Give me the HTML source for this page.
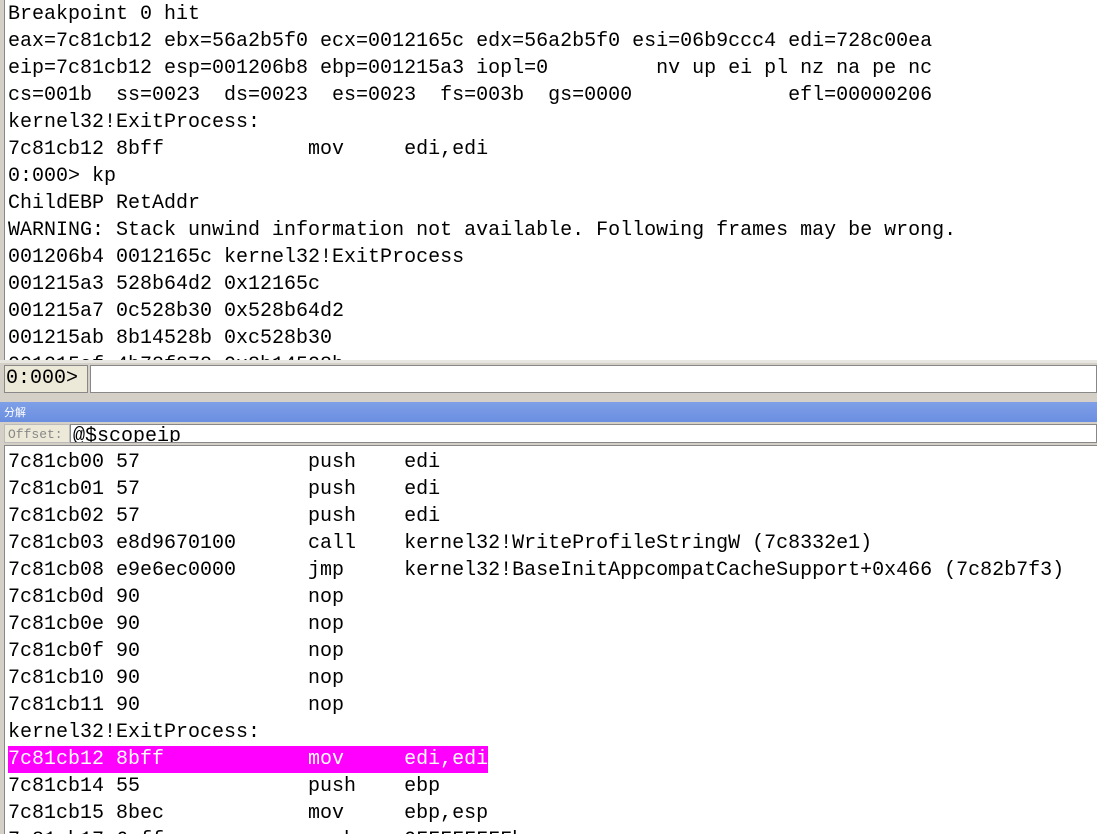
<!DOCTYPE html><html><head><style>
body{margin:0;width:1097px;height:834px;overflow:hidden;background:#d4d0c8;font-family:"Liberation Mono",monospace;}
.pane{position:absolute;background:#fff;overflow:hidden;white-space:pre;font-size:20px;line-height:27px;color:#000}
.hl{background:#ff00ff;color:#fff;display:inline-block;width:480px}
</style></head><body>
<div class="pane" style="left:4px;top:0;width:1093px;height:360px;padding-left:3px;box-sizing:border-box;padding-top:1px;border-left:1px solid #888">Breakpoint 0 hit
eax=7c81cb12 ebx=56a2b5f0 ecx=0012165c edx=56a2b5f0 esi=06b9ccc4 edi=728c00ea
eip=7c81cb12 esp=001206b8 ebp=001215a3 iopl=0         nv up ei pl nz na pe nc
cs=001b  ss=0023  ds=0023  es=0023  fs=003b  gs=0000             efl=00000206
kernel32!ExitProcess:
7c81cb12 8bff            mov     edi,edi
0:000&gt; kp
ChildEBP RetAddr
WARNING: Stack unwind information not available. Following frames may be wrong.
001206b4 0012165c kernel32!ExitProcess
001215a3 528b64d2 0x12165c
001215a7 0c528b30 0x528b64d2
001215ab 8b14528b 0xc528b30
001215af 4b78f878 0x8b14528b</div>
<div style="position:absolute;left:0;top:360px;width:1097px;height:3px;background:#e8e6e0"></div>
<div style="position:absolute;left:4px;top:365px;width:84px;height:28px;background:#ece9d8;border:1px solid #888;box-sizing:border-box;font-size:20px;line-height:26px;padding-left:1px">0:000&gt;</div>
<div style="position:absolute;left:90px;top:365px;width:1007px;height:28px;background:#fff;border:1px solid #888;box-sizing:border-box"></div>
<div style="position:absolute;left:0;top:402px;width:1097px;height:20px;background:linear-gradient(#7fa0e8,#6a8ee0);color:#fff;font:11px 'Noto Sans CJK SC',sans-serif;line-height:20px;padding-left:4px;box-sizing:border-box">分解</div>
<div style="position:absolute;left:4px;top:424px;width:66px;height:19px;background:#ece9d8;color:#888;font-size:13px;line-height:19px;padding-left:3px;box-sizing:border-box;border:1px solid #bbb">Offset:</div>
<div style="position:absolute;left:70px;top:424px;width:1027px;height:19px;background:#fff;overflow:hidden;font-size:20px;line-height:24px;padding-left:2px;border:1px solid #888;box-sizing:border-box">@$scopeip</div>
<div class="pane" style="left:4px;top:445px;width:1093px;height:389px;padding-left:3px;box-sizing:border-box;padding-top:3px;border-left:1px solid #888;border-top:1px solid #888">7c81cb00 57              push    edi
7c81cb01 57              push    edi
7c81cb02 57              push    edi
7c81cb03 e8d9670100      call    kernel32!WriteProfileStringW (7c8332e1)
7c81cb08 e9e6ec0000      jmp     kernel32!BaseInitAppcompatCacheSupport+0x466 (7c82b7f3)
7c81cb0d 90              nop
7c81cb0e 90              nop
7c81cb0f 90              nop
7c81cb10 90              nop
7c81cb11 90              nop
kernel32!ExitProcess:
<span class="hl">7c81cb12 8bff            mov     edi,edi</span>
7c81cb14 55              push    ebp
7c81cb15 8bec            mov     ebp,esp
7c81cb17 6aff            push    0FFFFFFFFh</div>
</body></html>
